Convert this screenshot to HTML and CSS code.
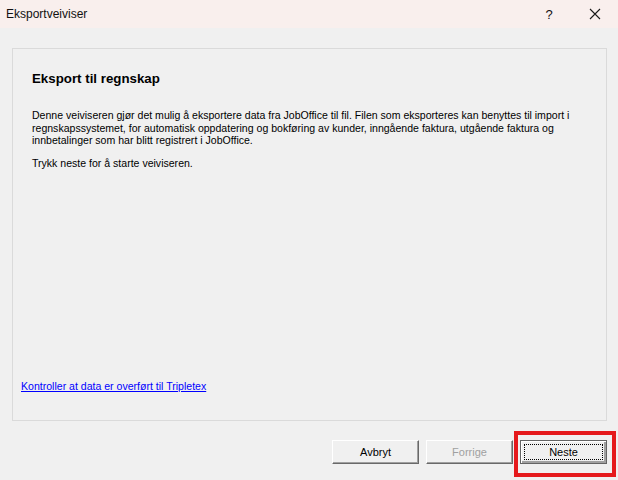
FILE: index.html
```html
<!DOCTYPE html>
<html lang="no">
<head>
    <meta charset="UTF-8">
    <title>Eksportveiviser</title>
    <link rel="stylesheet" href="styles.css">
</head>
<body>
    <div class="window">
        <div class="titlebar">
            <span class="title">Eksportveiviser</span>
            <div class="title-buttons">
                <span class="tb-help">?</span>
                <span class="tb-close">
                    <svg width="12" height="12" viewBox="0 0 12 12">
                        <path d="M1 1 L11 11 M11 1 L1 11" stroke="#1a1a1a" stroke-width="1.1" fill="none"/>
                    </svg>
                </span>
            </div>
        </div>

        <div class="content">
            <section class="panel">
                <div class="intro">
                    <h1>Eksport til regnskap</h1>
                    <p>Denne veiviseren gjør det mulig å eksportere data fra JobOffice til fil. Filen som eksporteres kan benyttes til import i regnskapssystemet, for automatisk oppdatering og bokføring av kunder, inngående faktura, utgående faktura og innbetalinger som har blitt registrert i JobOffice.</p>
                    <p>Trykk neste for å starte veiviseren.</p>
                </div>
                <a href="#" class="check-link">Kontroller at data er overført til Tripletex</a>
            </section>

            <div class="actions">
                <button class="btn">Avbryt</button>
                <button class="btn" disabled>Forrige</button>
                <div class="btn-wrap">
                    <button class="btn btn-default"><span class="focus">Neste</span></button>
                    <div class="highlight"></div>
                </div>
            </div>
        </div>
    </div>
</body>
</html>
```

FILE: styles.css
```css
* {
    margin: 0;
    padding: 0;
    box-sizing: border-box;
}

body {
    font-family: 'Liberation Sans', Arial, sans-serif;
    background: #f0f0f0;
    color: #000;
    width: 618px;
    height: 480px;
    overflow: hidden;
}

.window {
    display: flex;
    flex-direction: column;
    height: 480px;
}

.titlebar {
    height: 28px;
    background: #f9efed;
    display: flex;
    align-items: center;
    justify-content: space-between;
    padding-left: 6px;
}

.title {
    font-size: 12px;
    color: #111;
}

.title-buttons {
    display: flex;
    align-items: center;
    height: 100%;
}

.tb-help {
    width: 46px;
    text-align: center;
    font-size: 13px;
    color: #111;
}

.tb-close {
    width: 46px;
    display: flex;
    justify-content: center;
    align-items: center;
}

.content {
    flex: 1;
    padding: 20px 11px 0 12px;
    display: flex;
    flex-direction: column;
}

.panel {
    height: 373px;
    border: 1px solid #dadada;
    display: flex;
    flex-direction: column;
    justify-content: space-between;
    padding: 0 0 28px 8px;
}

.intro {
    padding: 22px 10px 0 11px;
    font-size: 10.55px;
    line-height: 12.5px;
}

.intro h1 {
    font-size: 13.3px;
    font-weight: bold;
    line-height: 16px;
    margin-bottom: 22px;
}

.intro p {
    margin-bottom: 10px;
}

.check-link {
    font-size: 10.55px;
    color: #0000ff;
    text-decoration: underline;
}

.actions {
    display: flex;
    justify-content: flex-end;
    gap: 7px;
    margin-top: 19px;
}

.btn {
    width: 87px;
    height: 24px;
    font-family: 'Liberation Sans', Arial, sans-serif;
    font-size: 11px;
    color: #000;
    background: #f0f0f0;
    border: 1px solid;
    border-color: #fff #696969 #696969 #fff;
    box-shadow: inset -1px -1px 0 #a0a0a0;
    display: flex;
    align-items: center;
    justify-content: center;
}

.btn:disabled {
    color: #a0a0a0;
}

.btn-wrap {
    position: relative;
}

.btn-default {
    border: 1px solid #646464;
    box-shadow: inset 1px 1px 0 #fff, inset -2px -2px 0 #a0a0a0;
    padding: 3px;
}

.focus {
    width: 100%;
    height: 100%;
    border: 1px dotted #000;
    display: flex;
    align-items: center;
    justify-content: center;
}

/* red marker drawn over the "Neste" button */
.highlight {
    position: absolute;
    left: -6px;
    top: -9px;
    width: 102px;
    height: 46px;
    border: 4px solid #e5191c;
    pointer-events: none;
}
```
